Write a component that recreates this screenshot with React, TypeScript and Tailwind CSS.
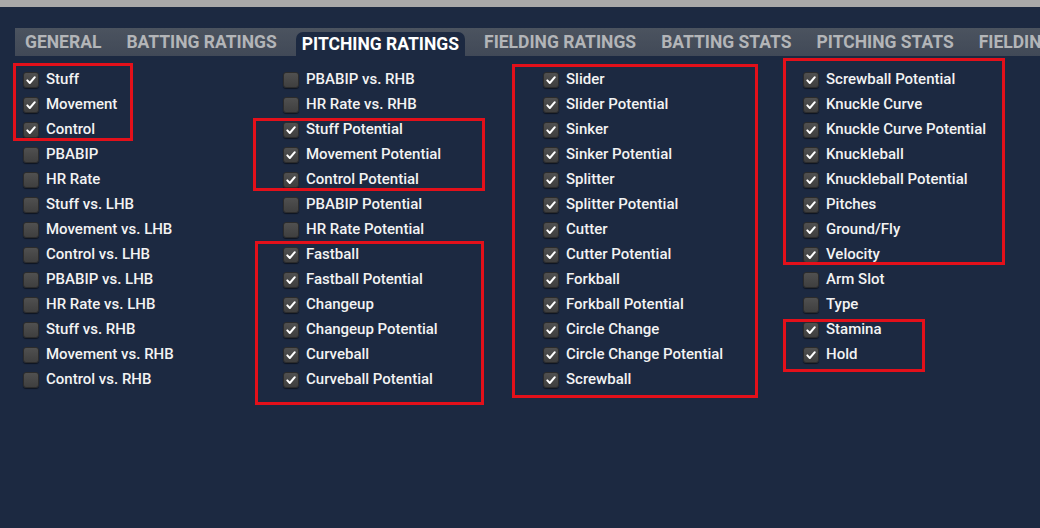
import React from "react";

type Item = [string, boolean];

const columns: Item[][] = [
  [
    ["Stuff", true],
    ["Movement", true],
    ["Control", true],
    ["PBABIP", false],
    ["HR Rate", false],
    ["Stuff vs. LHB", false],
    ["Movement vs. LHB", false],
    ["Control vs. LHB", false],
    ["PBABIP vs. LHB", false],
    ["HR Rate vs. LHB", false],
    ["Stuff vs. RHB", false],
    ["Movement vs. RHB", false],
    ["Control vs. RHB", false],
  ],
  [
    ["PBABIP vs. RHB", false],
    ["HR Rate vs. RHB", false],
    ["Stuff Potential", true],
    ["Movement Potential", true],
    ["Control Potential", true],
    ["PBABIP Potential", false],
    ["HR Rate Potential", false],
    ["Fastball", true],
    ["Fastball Potential", true],
    ["Changeup", true],
    ["Changeup Potential", true],
    ["Curveball", true],
    ["Curveball Potential", true],
  ],
  [
    ["Slider", true],
    ["Slider Potential", true],
    ["Sinker", true],
    ["Sinker Potential", true],
    ["Splitter", true],
    ["Splitter Potential", true],
    ["Cutter", true],
    ["Cutter Potential", true],
    ["Forkball", true],
    ["Forkball Potential", true],
    ["Circle Change", true],
    ["Circle Change Potential", true],
    ["Screwball", true],
  ],
  [
    ["Screwball Potential", true],
    ["Knuckle Curve", true],
    ["Knuckle Curve Potential", true],
    ["Knuckleball", true],
    ["Knuckleball Potential", true],
    ["Pitches", true],
    ["Ground/Fly", true],
    ["Velocity", true],
    ["Arm Slot", false],
    ["Type", false],
    ["Stamina", true],
    ["Hold", true],
  ],
];

const tabs = [
  "GENERAL",
  "BATTING RATINGS",
  "PITCHING RATINGS",
  "FIELDING RATINGS",
  "BATTING STATS",
  "PITCHING STATS",
  "FIELDING STATS",
];

function Check({ on }: { on: boolean }) {
  return (
    <div className="w-[16px] h-[16px] rounded-[3px] bg-gradient-to-b from-[#505050] to-[#3f3f3f] border border-[#2c2c2c] shadow-[0_1px_1px_rgba(0,0,0,0.5)] flex items-center justify-center shrink-0">
      {on && (
        <svg width="12" height="12" viewBox="0 0 12 12">
          <path
            d="M2.3 6.4 L4.8 9 L9.8 3.2"
            fill="none"
            stroke="#ffffff"
            strokeWidth="2"
            strokeLinecap="round"
            strokeLinejoin="round"
          />
        </svg>
      )}
    </div>
  );
}

const boxes = [
  "left-[13px] top-[63px] w-[120px] h-[78px]",
  "left-[253px] top-[118px] w-[232px] h-[73px]",
  "left-[255px] top-[241px] w-[229px] h-[164px]",
  "left-[512px] top-[64px] w-[246px] h-[334px]",
  "left-[783px] top-[58px] w-[222px] h-[207px]",
  "left-[783px] top-[319px] w-[142px] h-[53px]",
];

export default function App() {
  return (
    <div
      className="relative w-[1040px] h-[528px] overflow-hidden bg-[#1c2941]"
      style={{ fontFamily: "Roboto, 'Liberation Sans', sans-serif" }}
    >
      <div className="h-[7px] bg-[#a9a9a9]" />
      <div className="pt-[21px] pl-[15px]">
        <div className="h-[28px] bg-gradient-to-b from-[#4b535f] to-[#414957] flex items-end pl-[4px] gap-[13px] whitespace-nowrap overflow-hidden">
          {tabs.map((t) => {
            const active = t === "PITCHING RATINGS";
            return (
              <div
                key={t}
                className={
                  active
                    ? "h-[24px] px-[6px] rounded-t-[7px] bg-[#1c2941] text-white text-[17.5px] font-bold flex items-center pt-[1px] shrink-0"
                    : "h-[28px] px-[6px] text-[#b3b5b8] text-[17.5px] font-bold flex items-center shrink-0"
                }
              >
                {t}
              </div>
            );
          })}
        </div>
      </div>
      <div className="grid grid-cols-[260px_260px_260px_260px] pl-[23px] pt-[11px]">
        {columns.map((col, ci) => (
          <div key={ci} className="flex flex-col">
            {col.map(([label, on]) => (
              <div key={label} className="h-[25px] flex items-center gap-[7px]">
                <Check on={on} />
                <span className="text-[15px] font-medium text-[#f3f3f3] leading-none">
                  {label}
                </span>
              </div>
            ))}
          </div>
        ))}
      </div>
      {boxes.map((b, i) => (
        <div key={i} className={`absolute border-[3px] border-[#e3101a] ${b}`} />
      ))}
    </div>
  );
}
